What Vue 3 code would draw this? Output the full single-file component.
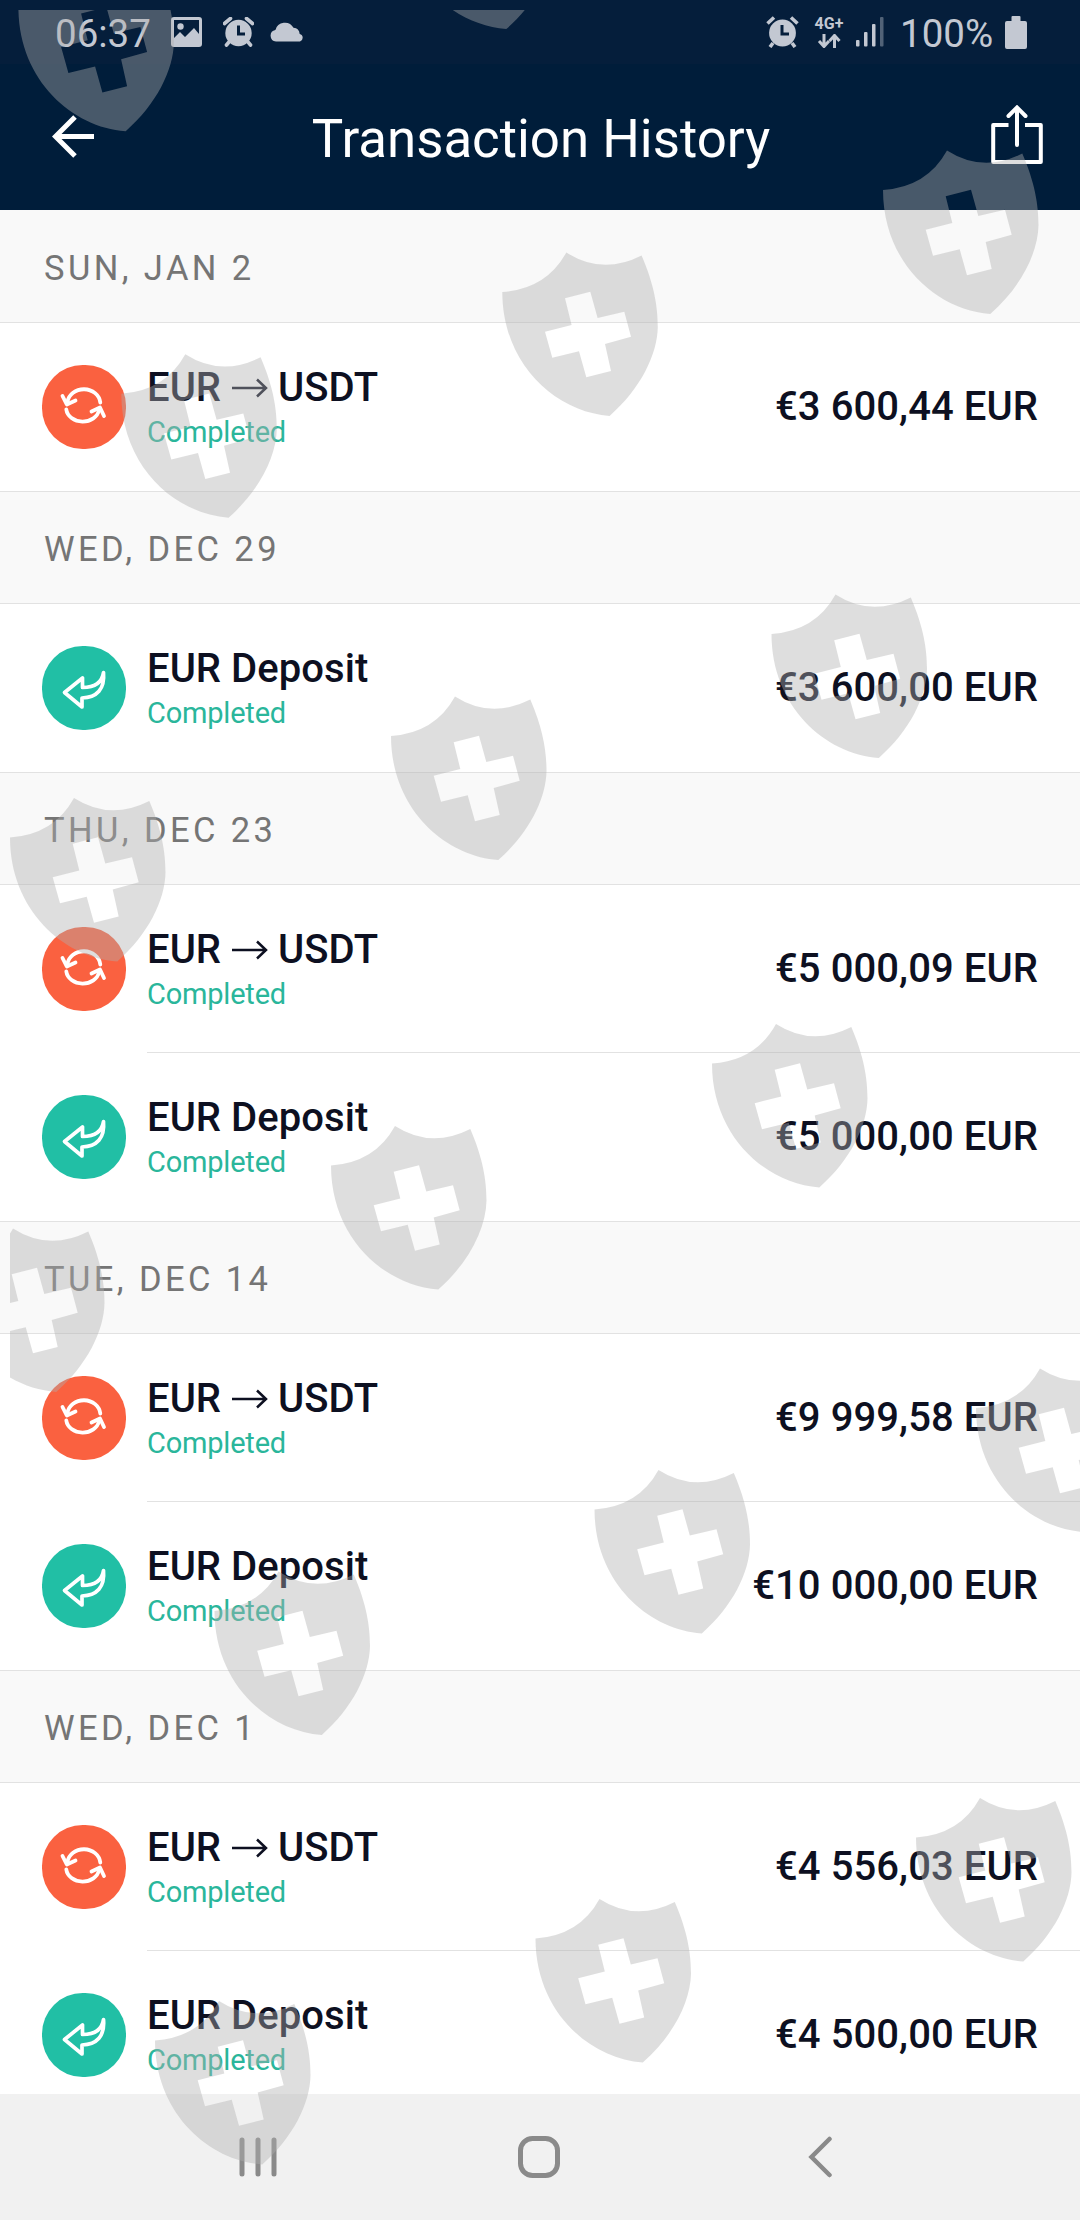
<!-- src/views/TransactionHistory.vue -->
<template>
  <div class="screen">
    <div class="status-bar">
      <span class="clock">06:37</span>
      <svg class="icon-image" width="31" height="30" viewBox="0 0 31 30">
        <path fill="currentColor" fill-rule="evenodd" d="M3 0h25a3 3 0 0 1 3 3v24a3 3 0 0 1-3 3H3a3 3 0 0 1-3-3V3a3 3 0 0 1 3-3zM3 3v18l6-6 5 5 9-9 5 6V3z"/>
        <circle cx="9.5" cy="9.5" r="3.2" fill="currentColor"/>
      </svg>
      <svg class="icon-alarm" width="31" height="30" viewBox="0 0 31 30">
        <circle cx="15.5" cy="16" r="13.2" fill="currentColor"/>
        <path d="M1.5 6.5l6-5M29.500 6.500l-6-5M6 25l-2.500 3M25 25l2.500 3" stroke="currentColor" stroke-width="3.600" stroke-linecap="round"/>
        <path class="hands" d="M15.500 8.500v8.500h6.500" fill="none" stroke-width="3"/>
      </svg>
      <svg class="icon-cloud" width="35" height="20" viewBox="0 0 35 20">
        <path fill="currentColor" d="M6 19.500a5.800 5.800 0 0 1-.6-11.500A9.800 9.800 0 0 1 23.500 5.800a6.800 6.800 0 0 1 6.200 6.200 3.900 3.900 0 0 1 .3 7.500z"/>
      </svg>

      <div class="status-right">
        <svg width="33" height="32" viewBox="0 0 33 32">
          <circle cx="16.500" cy="17" r="13.400" fill="currentColor"/>
          <path d="M1.500 7.500l6.500-6M31.500 7.500l-6.500-6M7 27l-3 4M26 27l3 4" stroke="currentColor" stroke-width="3.600"/>
          <path class="hands" d="M16 9v9h7" fill="none" stroke-width="3"/>
        </svg>
        <div class="network">
          <span>4G+</span>
          <svg width="24" height="14" viewBox="0 0 24 14" fill="none" stroke="currentColor" stroke-width="3">
            <path d="M7 0v12M2 7l5 5.500 5-5.500M17.500 14V2M12.500 7l5-5.500 5 5.500"/>
          </svg>
        </div>
        <svg class="icon-signal" width="28" height="30" viewBox="0 0 28 30" fill="currentColor">
          <rect x="0" y="23" width="3.500" height="6.500" rx="1"/>
          <rect x="8" y="15" width="3.500" height="14.500" rx="1"/>
          <rect x="16" y="7" width="3.500" height="22.500" rx="1"/>
          <rect x="24" y="0" width="3.500" height="29.500" rx="1" opacity="0.4"/>
        </svg>
        <span class="battery-text">100%</span>
        <svg width="22" height="33" viewBox="0 0 22 33" fill="currentColor">
          <path d="M6.500 1a1 1 0 0 1 1-1h7a1 1 0 0 1 1 1v4H20a2 2 0 0 1 2 2v24a2 2 0 0 1-2 2H2a2 2 0 0 1-2-2V7a2 2 0 0 1 2-2h4.500z"/>
        </svg>
      </div>
    </div>

    <header class="app-header">
      <button class="header-btn">
        <svg width="43" height="43" viewBox="0 0 43 43" fill="none" stroke="currentColor" stroke-width="5">
          <path d="M23 2L3.500 21.500 23 41M3.500 21.500H42"/>
        </svg>
      </button>
      <h1>Transaction History</h1>
      <button class="header-btn share-btn">
        <svg width="52" height="60" viewBox="0 0 52 60" fill="none" stroke="currentColor" stroke-width="4">
          <path d="M17.500 20H2.200v37h47.600V20H34" stroke-linejoin="round"/>
          <path d="M26 40V3M17.500 11L26 2.500l8.500 8.500" stroke-linecap="round"/>
        </svg>
      </button>
    </header>

    <main class="history">
      <section v-for="group in groups" :key="group.date" class="group">
        <h2 class="group-date">{{ group.date }}</h2>
        <div v-for="item in group.items" :key="item.amount" class="transaction">
          <div class="badge" :class="item.type">
            <svg v-if="item.type === 'exchange'" width="84" height="84" viewBox="0 0 84 84" fill="none" stroke="currentColor" stroke-width="3.800" stroke-linecap="round" stroke-linejoin="round">
              <path d="M58.300 37.500A16.500 14.600 0 0 0 25.500 37"/>
              <path d="M20.500 31l4.300 8.500 8.700-4"/>
              <path d="M24.300 44.500A16.500 13.600 0 0 0 57 45"/>
              <path d="M49.500 46.500l8.500-4 4 8.500"/>
            </svg>
            <svg v-else width="84" height="84" viewBox="0 0 84 84" fill="none" stroke="currentColor" stroke-width="3.700" stroke-linecap="round" stroke-linejoin="round">
              <path d="M22.500 46.500L40.500 32v9.500C53 41.500 60 37 61.500 26.500 63 43 55 51.500 40 52v9z"/>
            </svg>
          </div>
          <div class="details">
            <div v-if="item.type === 'exchange'" class="name">
              <span>EUR</span>
              <svg class="arrow" width="36" height="20" viewBox="0 0 36 20" fill="none" stroke="currentColor" stroke-width="2.500">
                <path d="M0 10h34M25 1.500l9 8.500-9 8.500"/>
              </svg>
              <span>USDT</span>
            </div>
            <div v-else class="name">EUR Deposit</div>
            <div class="state">Completed</div>
          </div>
          <div class="amount">{{ item.amount }}</div>
        </div>
      </section>
    </main>

    <nav class="nav-bar">
      <svg width="38" height="42" viewBox="0 0 38 42" fill="none" stroke="currentColor" stroke-width="5" stroke-linecap="round">
        <path d="M3 4v34M19 4v34M35 4v34"/>
      </svg>
      <svg width="42" height="42" viewBox="0 0 42 42" fill="none" stroke="currentColor" stroke-width="5">
        <rect x="2.500" y="2.500" width="37" height="37" rx="12"/>
      </svg>
      <svg width="24" height="42" viewBox="0 0 24 42" fill="none" stroke="currentColor" stroke-width="4.500" stroke-linecap="round">
        <path d="M21.500 3L3.500 21l18 18"/>
      </svg>
    </nav>

    <!-- shield pattern over the whole screen -->
    <svg class="shields" width="1070" height="2210" viewBox="10 10 1070 2210">
      <path
        v-for="(s, i) in shields"
        :key="i"
        :transform="`translate(${s[0]} ${s[1]})`"
        fill-rule="evenodd"
        d="M0 40Q44 37 64 .5Q100 23.500 139.300 3.500C152 33 155.500 55 155.500 75C155 103 138 137 107.300 164C53 160 0 112 0 40ZM62.700 46.300L69.300 73 42.700 79.700 50 105.700 76.700 99.300 84 125.300 108.700 119 102.700 92 128.700 84.700 122 59.700 95.300 66 88 39.700Z"
      />
    </svg>
  </div>
</template>

<script setup>
const groups = [
  { date: 'SUN, JAN 2', items: [{ type: 'exchange', amount: '€3 600,44 EUR' }] },
  { date: 'WED, DEC 29', items: [{ type: 'deposit', amount: '€3 600,00 EUR' }] },
  {
    date: 'THU, DEC 23',
    items: [
      { type: 'exchange', amount: '€5 000,09 EUR' },
      { type: 'deposit', amount: '€5 000,00 EUR' }
    ]
  },
  {
    date: 'TUE, DEC 14',
    items: [
      { type: 'exchange', amount: '€9 999,58 EUR' },
      { type: 'deposit', amount: '€10 000,00 EUR' }
    ]
  },
  {
    date: 'WED, DEC 1',
    items: [
      { type: 'exchange', amount: '€4 556,03 EUR' },
      { type: 'deposit', amount: '€4 500,00 EUR' }
    ]
  }
]

const shields = [
  [18.4, -32.7], [399, -135], [883, 150],
  [502.3, 252], [121.3, 353.7],
  [771.5, 594], [391, 696], [10, 797.5],
  [712, 1023.5], [331, 1125.5], [-51, 1228],
  [976, 1368], [594.5, 1469.5], [214.5, 1571],
  [916, 1797.5], [535.5, 1898.5], [155, 2000.5]
]
</script>

<style>
body {
  margin: 0;
}
</style>

<style scoped>
.screen {
  position: relative;
  display: flex;
  flex-direction: column;
  width: 1080px;
  height: 2220px;
  overflow: hidden;
  background: #ffffff;
  font-family: Roboto, "Liberation Sans", sans-serif;
}

.screen svg {
  display: block;
  flex: none;
}

.status-bar {
  display: flex;
  align-items: center;
  flex: none;
  height: 64px;
  box-sizing: border-box;
  padding: 0 53px 0 55px;
  background: #051e3b;
  color: #c3c8d2;
}

.clock,
.battery-text {
  padding-top: 4px;
  font-size: 38.5px;
  line-height: 46px;
}

.clock {
  width: 116px;
}

.icon-alarm {
  margin-left: 21px;
}

.icon-cloud {
  margin-left: 16px;
}

.hands {
  stroke: #051e3b;
}

.status-right {
  display: flex;
  align-items: center;
  margin-left: auto;
}

.network {
  display: flex;
  flex-direction: column;
  align-items: center;
  gap: 2px;
  width: 32px;
  margin-left: 14px;
  font-size: 16px;
  font-weight: 700;
  line-height: 16px;
}

.icon-signal {
  margin-left: 11px;
}

.battery-text {
  width: 93px;
  margin-left: 16px;
  margin-right: 12px;
}

.app-header {
  display: flex;
  align-items: center;
  justify-content: space-between;
  flex: none;
  height: 146px;
  box-sizing: border-box;
  padding: 0 37px 0 52px;
  background: #001d3a;
  color: #ffffff;
}

.app-header h1 {
  margin: 4px 4px 0 0;
  font-size: 52.8px;
  font-weight: 400;
  line-height: 62px;
}

.header-btn {
  padding: 0 0 2px;
  border: none;
  background: none;
  color: inherit;
}

.share-btn {
  padding-bottom: 5px;
}

.history {
  flex: 1;
  min-height: 0;
  overflow: hidden;
}

.group-date {
  box-sizing: border-box;
  height: 112px;
  margin: 0;
  padding-left: 44px;
  border-bottom: 1px solid #e2e2e2;
  background: #f9f9f9;
  color: #757575;
  font-size: 34.5px;
  font-weight: 400;
  line-height: 114px;
  letter-spacing: 3.4px;
}

.group:first-child .group-date {
  height: 113px;
  line-height: 116px;
}

.transaction {
  display: flex;
  align-items: flex-start;
  position: relative;
  box-sizing: border-box;
  height: 168px;
  padding: 42px 42px 0;
}

.transaction::after {
  content: "";
  position: absolute;
  left: 147px;
  right: 0;
  bottom: 0;
  height: 1px;
  background: #e2e2e2;
}

.transaction:last-child {
  height: 169px;
}

.transaction:last-child::after {
  left: 0;
}

.badge {
  width: 84px;
  height: 84px;
  border-radius: 48.5%;
  color: #ffffff;
}

.badge.exchange {
  background: #fa6140;
}

.badge.deposit {
  background: #21bfa5;
}

.details {
  margin-left: 21px;
}

.name {
  display: flex;
  align-items: center;
  height: 46px;
  color: #0d1021;
  font-size: 40px;
  font-weight: 500;
  line-height: 46px;
  letter-spacing: 0.05px;
}

.arrow {
  margin: 0 10px 0 11px;
}

.state {
  margin-top: 3px;
  color: #2ab69b;
  font-size: 29px;
  line-height: 36px;
  letter-spacing: -0.2px;
}

.amount {
  margin-left: auto;
  color: #0d1021;
  font-size: 40px;
  font-weight: 500;
  line-height: 84px;
  letter-spacing: 0.08px;
}

.nav-bar {
  display: grid;
  grid-template-columns: repeat(3, 281px);
  place-items: center;
  flex: none;
  height: 126px;
  padding-left: 117px;
  box-sizing: border-box;
  background: #f1f1f1;
  color: #8a8a8a;
}

.shields {
  position: absolute;
  left: 10px;
  top: 10px;
  overflow: hidden;
  fill: rgba(176, 176, 176, 0.41);
  pointer-events: none;
}
</style>
